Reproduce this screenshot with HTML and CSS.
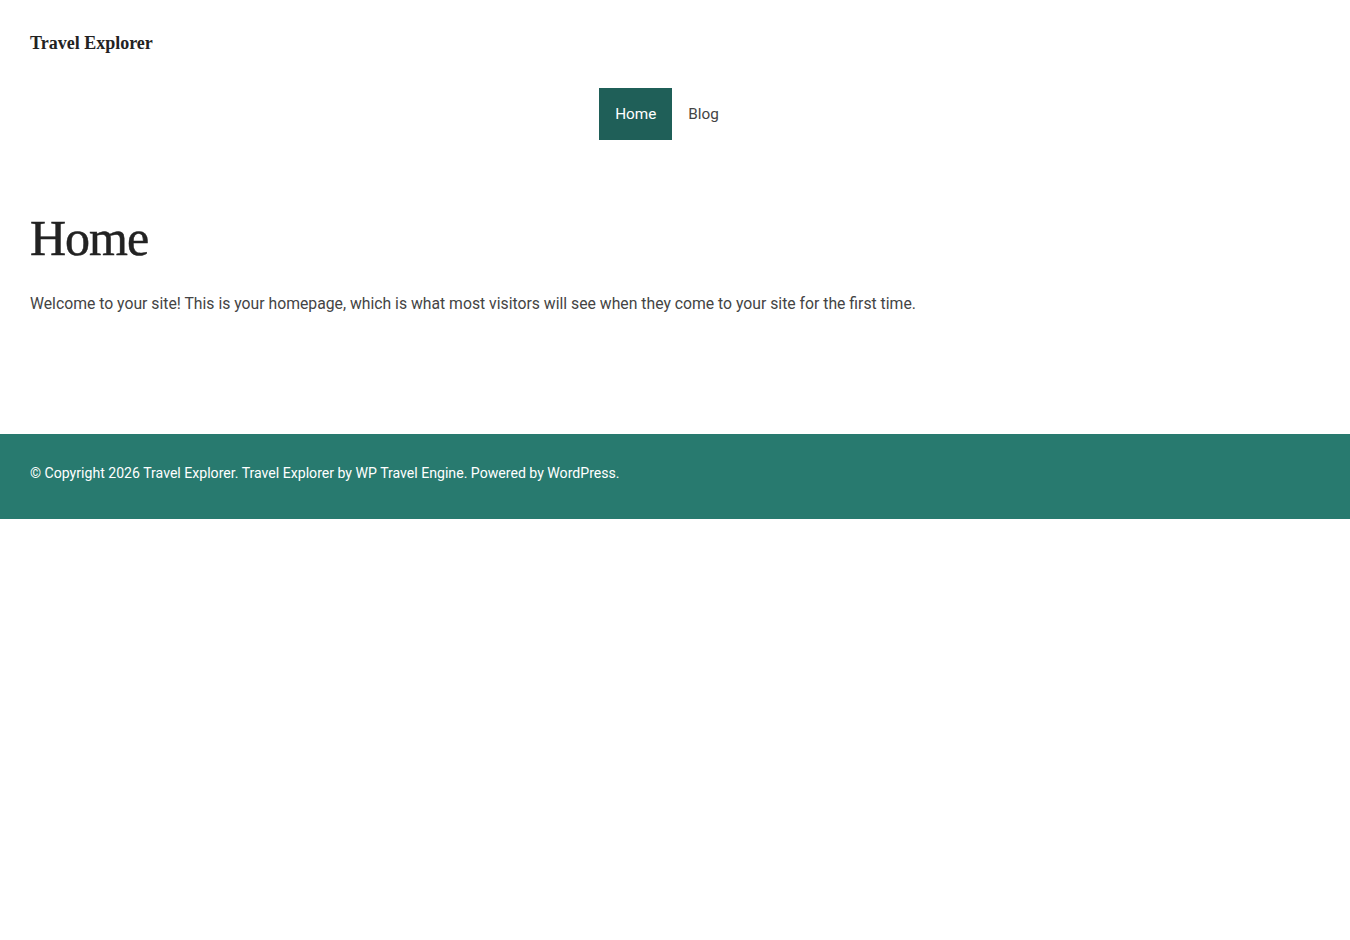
FILE: index.html
```html
<!DOCTYPE html>
<html lang="en">
<head>
  <meta charset="UTF-8">
  <meta name="viewport" content="width=device-width, initial-scale=1.0">
  <title>Travel Explorer</title>
  <link rel="stylesheet" href="styles.css">
</head>
<body>
  <header class="site-header">
    <div class="site-branding">
      <p class="site-title"><a href="#">Travel Explorer</a></p>
    </div>
    <nav class="main-navigation">
      <ul class="menu">
        <li class="current"><a href="#">Home</a></li>
        <li><a href="#">Blog</a></li>
      </ul>
    </nav>
  </header>

  <main class="site-main">
    <h1 class="page-title">Home</h1>
    <p>Welcome to your site! This is your homepage, which is what most visitors will see when they come to your site for the first time.</p>
  </main>

  <footer class="site-footer">
    <p>&copy; Copyright 2026 <a href="#">Travel Explorer</a>. Travel Explorer by <a href="#">WP Travel Engine</a>. Powered by <a href="#">WordPress</a>.</p>
  </footer>
</body>
</html>
```

FILE: styles.css
```css
body {
  margin: 0;
  font-family: Roboto, 'Liberation Sans', sans-serif;
  font-size: 15.75px;
  color: #444;
  background: #fff;
}
a {
  color: inherit;
  text-decoration: none;
}
.site-header {
  padding: 0 30px;
}
.site-branding {
  padding-top: 33px;
  height: 55px;
  box-sizing: border-box;
}
.site-title {
  margin: 0;
  font-family: 'Liberation Serif', serif;
  font-weight: bold;
  font-size: 18px;
  line-height: 20px;
  color: #222;
}
.main-navigation {
  display: flex;
  justify-content: center;
  padding: 33px 16px 0 0;
}
.menu {
  display: flex;
  list-style: none;
  margin: 0;
  padding: 0;
}
.menu a {
  display: block;
  padding: 0 16px;
  height: 52px;
  line-height: 53px;
  font-size: 15.3px;
  color: #444;
}
.menu .current a {
  background: #1f5f58;
  color: #fff;
}
.site-main {
  padding: 68px 30px 117px;
}
.page-title {
  margin: 0;
  font-family: 'Liberation Serif', serif;
  font-weight: normal;
  font-size: 50px;
  line-height: 60px;
  letter-spacing: -1px;
  -webkit-text-stroke: 0.5px #222;
  color: #222;
}
.site-main p {
  margin: 23px 0 0;
  line-height: 26px;
}
.site-footer {
  background: #287a6f;
  color: #fff;
  padding: 0 30px 8px;
  height: 85px;
  box-sizing: border-box;
  display: flex;
  align-items: center;
}
.site-footer p {
  margin: 0;
  font-size: 14.1px;
  line-height: 22px;
}
```
